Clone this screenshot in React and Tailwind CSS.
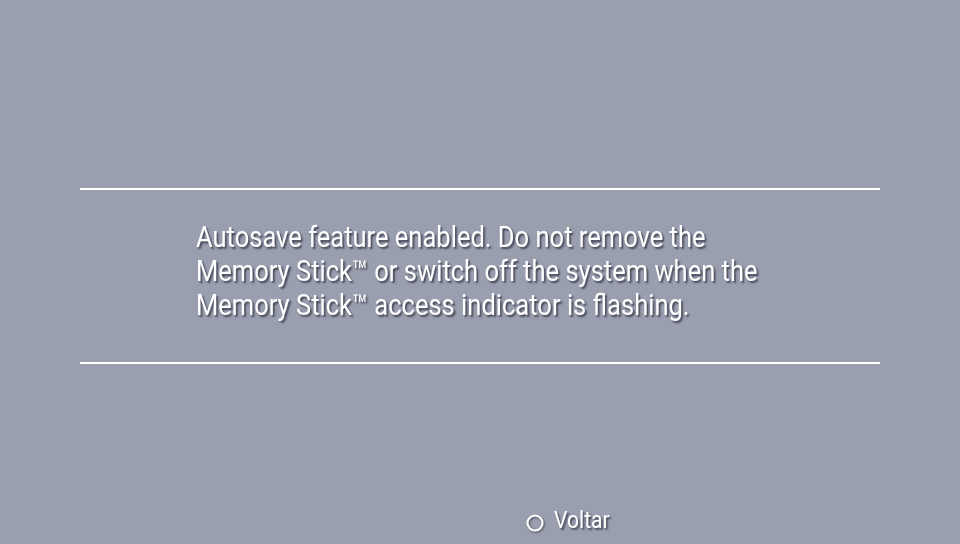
export default function App() {
  const shadow = '[text-shadow:2px_2px_2px_rgba(40,42,55,0.75)]'
  return (
    <div className="w-[960px] h-[544px] bg-[#9a9fb0] flex flex-col overflow-hidden font-['Roboto',sans-serif] text-white">
      <div className="h-[188px]" />
      <div className="mx-[80px] h-[2px] bg-white" />
      <div className={`pl-[196px] pt-[30px] h-[172px] text-[29px] leading-[34px] ${shadow}`}>
        <div className="inline-block origin-left scale-x-[0.88] whitespace-nowrap">
          <p>Autosave feature enabled. Do not remove the</p>
          <p>Memory Stick™ or switch off the system when the</p>
          <p>Memory Stick™ access indicator is flashing.</p>
        </div>
      </div>
      <div className="mx-[80px] h-[2px] bg-white" />
      <div className="flex-1" />
      <div className="flex items-center pl-[525px] pb-[10px] gap-[9px]">
        <svg width="20" height="20" viewBox="0 0 20 20" className="mt-[6px] [filter:drop-shadow(1px_1px_1px_rgba(40,42,55,0.7))]">
          <circle cx="10" cy="10" r="7.5" fill="none" stroke="white" strokeWidth="2.2" />
        </svg>
        <span className={`text-[24px] leading-[28px] inline-block origin-left scale-x-[0.88] ${shadow}`}>Voltar</span>
      </div>
    </div>
  )
}
